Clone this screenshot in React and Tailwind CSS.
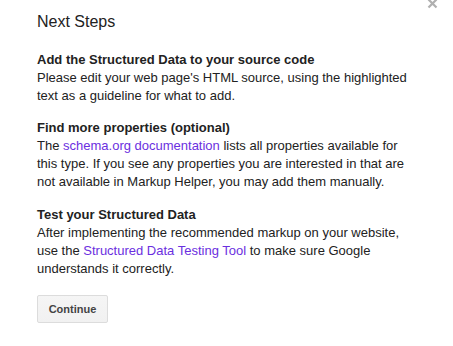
import React from "react";

function Section({ title, children, gap = "mb-[14px]" }) {
  return (
    <div className={gap}>
      <div className="font-bold text-[13px] leading-[18px] text-[#222]">{title}</div>
      <p className="text-[13px] leading-[18px] text-[#222]">{children}</p>
    </div>
  );
}

export default function App() {
  const link = "text-[#6b2fe0] no-underline";
  return (
    <div className="relative w-[453px] h-[346px] bg-white overflow-hidden" style={{ fontFamily: '"Liberation Sans", Arial, sans-serif' }}>
      <button className="absolute right-[15px] top-[-2px] w-[12px] h-[11px] flex items-center justify-center">
        <svg width="11" height="11" viewBox="0 0 11 11">
          <path d="M1.5 1.5 L9.5 9.5 M9.5 1.5 L1.5 9.5" stroke="#b0b0b0" strokeWidth="2.2" />
        </svg>
      </button>

      <div className="pl-[37px] w-[415px] pt-[12px]">
        <h1 className="text-[16px] leading-[20px] text-[#222] mb-[19px]">Next Steps</h1>

        <Section title="Add the Structured Data to your source code">
          Please edit your web page's HTML source, using the highlighted text as a guideline for what to add.
        </Section>

        <Section title="Find more properties (optional)" gap="mb-[15px]">
          The <a href="#" className={link}>schema.org documentation</a> lists all properties available for this type. If you see any properties you are interested in that are not available in Markup Helper, you may add them manually.
        </Section>

        <Section title="Test your Structured Data">
          After implementing the recommended markup on your website, use the <a href="#" className={link}>Structured Data Testing Tool</a> to make sure Google understands it correctly.
        </Section>

        <button className="mt-[3px] w-[71px] h-[28px] rounded-[2px] border border-[#dcdcdc] bg-gradient-to-b from-[#f5f5f5] to-[#f1f1f1] text-[11px] font-bold text-[#444]">
          Continue
        </button>
      </div>
    </div>
  );
}
